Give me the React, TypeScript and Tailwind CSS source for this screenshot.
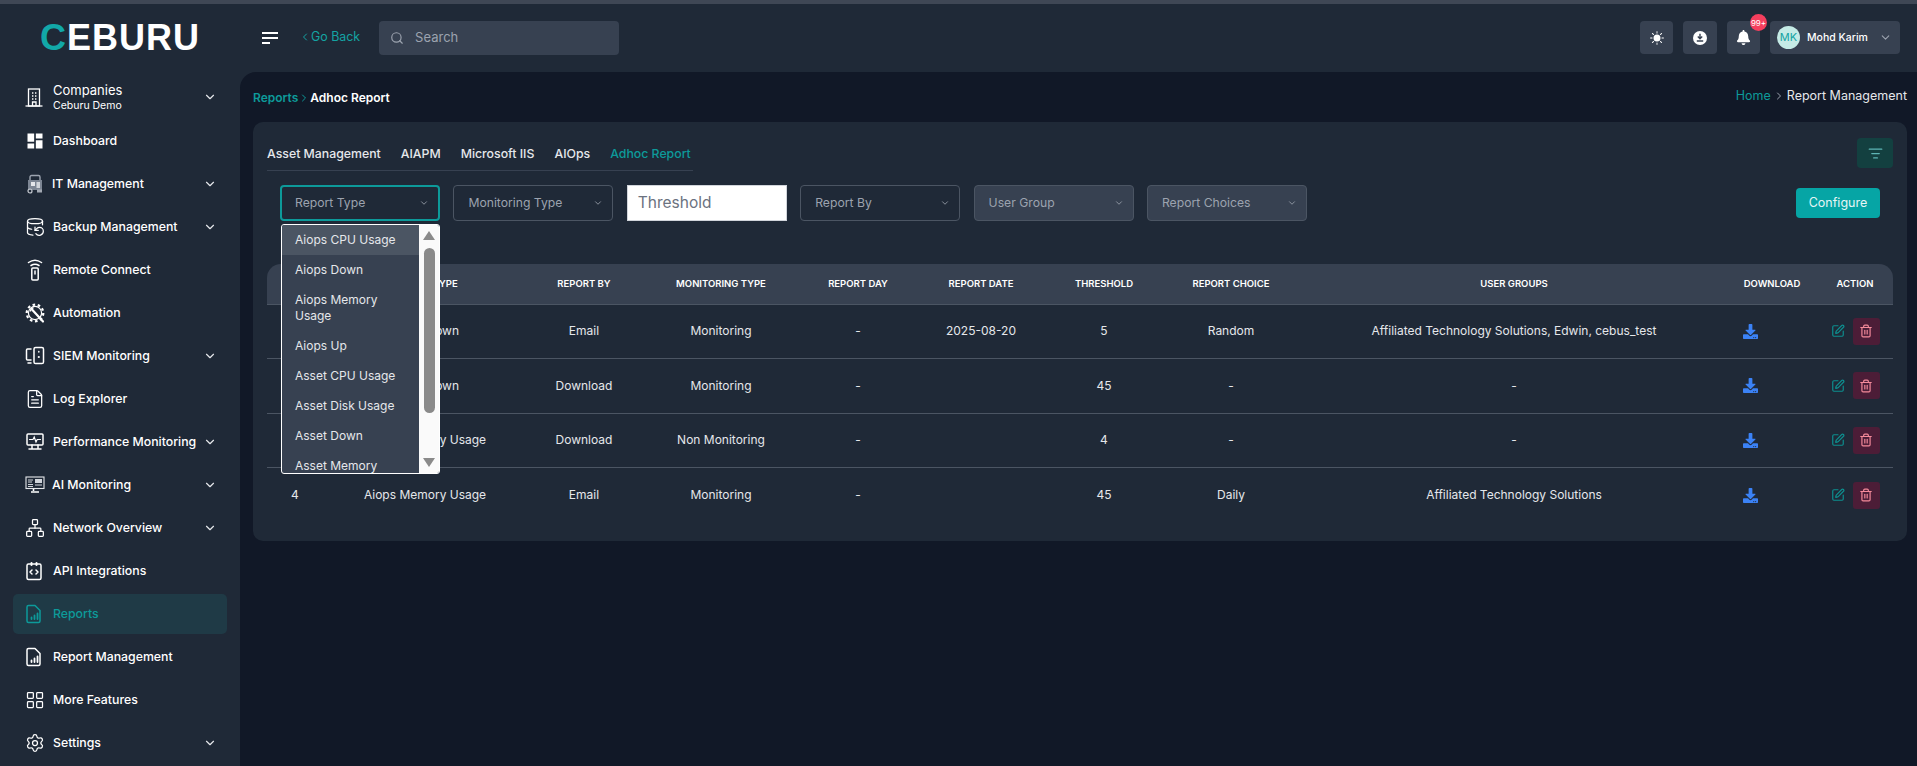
import { ChevronDown, ChevronLeft, ChevronRight, Search, ListFilter, SquarePen, Trash2, DatabaseBackup, FileText, Network, LayoutGrid, Settings } from 'lucide-react';
import { MdDashboard } from 'react-icons/md';
import { FaDownload, FaBell } from 'react-icons/fa';
import { BsSunFill } from 'react-icons/bs';

const CompanyIcon = () => (
  <svg width="18" height="19" viewBox="0 0 18 19" fill="none" stroke="#fff" strokeWidth="1.300">
    <rect x="3.500" y="1" width="11" height="17" />
    <path d="M0.500 18h17" />
    <path d="M7 5h1.400M10 5h1.400M7 8h1.400M10 8h1.400M7 11h1.400M10 11h1.400" strokeWidth="1.500" />
    <path d="M7.500 18v-4h3.500v4" />
  </svg>
);

const ItIcon = () => (
  <svg width="20" height="20" viewBox="0 0 20 20" fill="none">
    <rect x="5" y="1.500" width="10" height="8" rx="1.500" stroke="#9ca3af" strokeWidth="1.400" />
    <rect x="3" y="6" width="14" height="10" fill="#7d8694" />
    <rect x="6" y="8" width="4" height="4" fill="#e5e7eb" />
    <rect x="11.500" y="8" width="3.500" height="6" fill="#d1d5db" />
    <circle cx="5" cy="17" r="2" stroke="#c5c9d0" strokeWidth="1.200" />
    <rect x="12" y="15.500" width="5" height="3" fill="#a3a9b3" />
  </svg>
);

const RemoteIcon = () => (
  <svg width="20" height="22" viewBox="0 0 20 22" fill="none" stroke="#fff" strokeWidth="1.500" strokeLinecap="round">
    <path d="M3.500 3.500C7.500 0.600 12.500 0.600 16.500 3.500" />
    <path d="M6 6.500c2.600-1.600 5.400-1.600 8 0" />
    <rect x="6.800" y="9" width="6.400" height="12" rx="1" />
    <path d="M10 12v3" />
  </svg>
);

const AutomationIcon = () => (
  <svg width="21" height="21" viewBox="0 0 21 21" fill="none" stroke="#fff">
    <circle cx="10" cy="10" r="8.300" strokeDasharray="2.600 2.600" strokeWidth="2.200" />
    <circle cx="10" cy="10" r="6.600" strokeWidth="1.200" />
    <path d="M7 6.500l11 12" strokeWidth="2.200" strokeLinecap="round" />
    <path d="M5.500 8.500a3 3 0 0 1 3-3.500" strokeWidth="1.400" />
  </svg>
);

const SiemIcon = () => (
  <svg width="20" height="20" viewBox="0 0 20 20" fill="none" stroke="#fff" strokeWidth="1.500" strokeLinecap="round">
    <path d="M6 3H2.500A1 1 0 0 0 1.500 4v9a1 1 0 0 0 1 1H6" />
    <path d="M3 17h3" />
    <rect x="9" y="1.500" width="9.500" height="16" rx="1.600" />
    <circle cx="13.800" cy="11" r="1.100" fill="#fff" stroke="none" />
    <path d="M13.800 5.500v.4" />
  </svg>
);

const PerfIcon = () => (
  <svg width="20" height="20" viewBox="0 0 20 20" fill="none" stroke="#fff" strokeWidth="1.500" strokeLinecap="round">
    <rect x="2" y="2" width="16" height="11" rx="1" />
    <path d="M4.500 7.500h3.500l1.200-2.500 1.800 5 1.200-2.500h3.300" strokeWidth="1.200" />
    <path d="M7 13v3.500M13 13v3.500M4 17h12" />
  </svg>
);

const AiIcon = () => (
  <svg width="20" height="18" viewBox="0 0 20 18" fill="none">
    <rect x="1" y="1" width="18" height="11.500" stroke="#e5e7eb" strokeWidth="1.100" />
    <path d="M3 4h5M3 6h4M3 8.500h5M3 10.500h5" stroke="#d1d5db" strokeWidth="1" />
    <rect x="10" y="3" width="7" height="4" fill="#d1d5db" />
    <path d="M10 9h7" stroke="#d1d5db" />
    <path d="M8.500 13v2M6 16h8" stroke="#fff" strokeWidth="1.600" />
  </svg>
);

const ApiIcon = () => (
  <svg width="18" height="20" viewBox="0 0 18 20" fill="none" stroke="#fff" strokeWidth="1.500" strokeLinecap="round" strokeLinejoin="round">
    <rect x="2" y="3" width="14" height="15.500" rx="1.500" />
    <path d="M6.500 2v2M11.500 2v2" strokeWidth="2" />
    <path d="M7 9l-2 2 2 2M11 9l2 2-2 2" />
  </svg>
);

const ReportIcon = ({ color }: { color: string }) => (
  <svg width="18" height="20" viewBox="0 0 18 20" fill="none" stroke={color} strokeWidth="1.500" strokeLinecap="round" strokeLinejoin="round">
    <path d="M3.500 1.500h6.500l5 5V17a1.500 1.500 0 0 1-1.500 1.500h-10A1.500 1.500 0 0 1 2 17V3a1.500 1.500 0 0 1 1.500-1.500z" />
    <path d="M6.500 15v-1.500M9.500 15v-3.500M12.500 15V9.500" strokeWidth="1.800" />
  </svg>
);

const CircleDownload = () => (
  <svg width="14" height="14" viewBox="0 0 14 14">
    <circle cx="7" cy="7" r="7" fill="#fff" />
    <path d="M7 2.800v4.600M4.800 5.600L7 7.800l2.200-2.200M3.800 10h6.400" fill="none" stroke="#374151" strokeWidth="1.400" />
  </svg>
);

const sidebarItems = [
  { label: 'Dashboard', icon: <MdDashboard size={20} color="#fff" /> },
  { label: 'IT Management', icon: <ItIcon />, arrow: true, tight: true },
  { label: 'Backup Management', icon: <DatabaseBackup size={20} color="#fff" strokeWidth={1.5} />, arrow: true },
  { label: 'Remote Connect', icon: <RemoteIcon /> },
  { label: 'Automation', icon: <AutomationIcon /> },
  { label: 'SIEM Monitoring', icon: <SiemIcon />, arrow: true },
  { label: 'Log Explorer', icon: <FileText size={20} color="#fff" strokeWidth={1.5} /> },
  { label: 'Performance Monitoring', icon: <PerfIcon />, arrow: true },
  { label: 'AI Monitoring', icon: <AiIcon />, arrow: true, tight: true },
  { label: 'Network Overview', icon: <Network size={20} color="#fff" strokeWidth={1.5} />, arrow: true },
  { label: 'API Integrations', icon: <ApiIcon /> },
  { label: 'Reports', icon: <ReportIcon color="#0d9a9a" />, active: true },
  { label: 'Report Management', icon: <ReportIcon color="#fff" /> },
  { label: 'More Features', icon: <LayoutGrid size={20} color="#fff" strokeWidth={1.5} /> },
  { label: 'Settings', icon: <Settings size={20} color="#fff" strokeWidth={1.5} />, arrow: true },
];

const tabs = ['Asset Management', 'AIAPM', 'Microsoft IIS', 'AIOps', 'Adhoc Report'];

const dropdownOptions = ['Aiops CPU Usage', 'Aiops Down', 'Aiops Memory Usage', 'Aiops Up', 'Asset CPU Usage', 'Asset Disk Usage', 'Asset Down', 'Asset Memory Usage'];

const columns = [
  { name: '#', width: 'w-[56px]' },
  { name: 'Report Type', width: 'w-[204px]' },
  { name: 'Report By', width: 'w-[114px]' },
  { name: 'Monitoring Type', width: 'w-[160px]' },
  { name: 'Report Day', width: 'w-[114px]' },
  { name: 'Report Date', width: 'w-[132px]' },
  { name: 'Threshold', width: 'w-[114px]' },
  { name: 'Report Choice', width: 'w-[140px]' },
  { name: 'User Groups', width: 'w-[426px]' },
  { name: 'Download', width: 'w-[90px]' },
  { name: 'Action', width: 'w-[76px]' },
];

const rows = [
  ['1', 'Aiops Down', 'Email', 'Monitoring', '-', '2025-08-20', '5', 'Random', 'Affiliated Technology Solutions, Edwin, cebus_test'],
  ['2', 'Aiops Down', 'Download', 'Monitoring', '-', '', '45', '-', '-'],
  ['3', 'Aiops Memory Usage', 'Download', 'Non Monitoring', '-', '', '4', '-', '-'],
  ['4', 'Aiops Memory Usage', 'Email', 'Monitoring', '-', '', '45', 'Daily', 'Affiliated Technology Solutions'],
];

function Dropdown() {
  return (
    <div className="absolute left-[-1px] top-[37px] z-10 flex h-[250px] w-[159px] overflow-hidden rounded-[3px] border border-white bg-[#374151]">
      <div className="flex-1 overflow-hidden">
        {dropdownOptions.map((opt, i) => (
          <div key={opt} className={`px-[13px] py-[7px] text-[12px] leading-[16px] text-[#e5e7eb] ${i === 0 ? 'bg-[#4b5563]' : ''}`}>
            {opt}
          </div>
        ))}
      </div>
      <div className="flex w-[20px] flex-col items-center bg-[#fafafa] pt-[6px]">
        <svg width="12" height="9" viewBox="0 0 12 9"><polygon points="6,0 12,9 0,9" fill="#8a8a8a" /></svg>
        <div className="mt-[8px] h-[165px] w-[11px] rounded-full bg-[#8a8a8a]" />
        <svg className="mt-[45px]" width="12" height="9" viewBox="0 0 12 9"><polygon points="0,0 12,0 6,9" fill="#8a8a8a" /></svg>
      </div>
    </div>
  );
}

function FilterSelect({ label, focused, disabled }: { label: string; focused?: boolean; disabled?: boolean }) {
  return (
    <div className={`relative flex h-[36px] w-[160px] items-center justify-between rounded-[4px] pr-[9px] text-[12.200px] text-[#9ca3af] ${focused ? 'border-2 border-[#0d9a9a] pl-[13px]' : 'border border-[#4b5563] pl-[14px]'} ${disabled ? 'bg-[#374151]' : ''}`}>
      <span>{label}</span>
      <ChevronDown size={10} color="#9ca3af" strokeWidth={2} />
      {focused && <Dropdown />}
    </div>
  );
}

export default function App() {
  return (
    <div className="flex h-screen w-screen flex-col overflow-hidden bg-[#1f2937] text-white [font-family:Inter,sans-serif]">
      <div className="h-[4px] shrink-0 bg-[#3f4755]" />

      <header className="flex h-[68px] shrink-0 items-center pb-[1px]">
        <div className="w-[240px] pl-[40px]">
          <span className="text-[36px] font-bold leading-none tracking-[1px] [font-family:'Liberation_Sans',sans-serif]">
            <span className="text-[#12a8a8]">C</span>EBURU
          </span>
        </div>
        <div className="flex flex-1 items-center pl-[22px] pr-[17px]">
          <svg width="17" height="14" viewBox="0 0 17 14" stroke="#fff" strokeWidth="2">
            <path d="M0 2h16M0 7h16M0 12h8" />
          </svg>
          <button className="ml-[20px] flex items-center text-[12.400px] text-[#14a3a3]">
            <ChevronLeft size={12} />
            Go Back
          </button>
          <div className="ml-[19px] flex h-[34px] w-[240px] items-center rounded-[4px] bg-[#374151] pl-[11px] text-[13px] text-[#9ca3af]">
            <Search size={14} color="#9ca3af" />
            <span className="ml-[11px]">Search</span>
          </div>

          <div className="ml-auto flex items-center">
            <button className="flex h-[33px] w-[33px] items-center justify-center rounded-[4px] bg-[#374151]">
              <BsSunFill size={14} color="#fff" />
            </button>
            <button className="ml-[10px] flex h-[33px] w-[34px] items-center justify-center rounded-[4px] bg-[#374151]">
              <CircleDownload />
            </button>
            <button className="relative ml-[10px] flex h-[33px] w-[33px] items-center justify-center rounded-[4px] bg-[#374151]">
              <FaBell size={15} color="#fff" />
              <span className="absolute -right-[7px] -top-[7px] flex h-[17px] w-[17px] items-center justify-center rounded-full bg-[#f43f5e] text-[8px]">99+</span>
            </button>
            <div className="ml-[10px] flex h-[33px] w-[130px] items-center rounded-[4px] bg-[#374151] pl-[7px]">
              <span className="flex h-[23px] w-[23px] items-center justify-center rounded-full bg-[#c5ebe6] text-[11px] text-[#14a3a3]">MK</span>
              <span className="ml-[7px] text-[10.500px] font-medium">Mohd Karim</span>
              <ChevronDown className="ml-auto mr-[8px]" size={13} color="#9ca3af" />
            </div>
          </div>
        </div>
      </header>

      <div className="flex min-h-0 flex-1">
        <aside className="flex w-[240px] shrink-0 flex-col gap-[3px] px-[13px] pt-[6px]">
          <div className="flex h-[40px] shrink-0 items-center pb-[2px] pl-[12px] pr-[10px]">
            <span className="flex w-[28px] shrink-0"><CompanyIcon /></span>
            <div className="flex flex-col">
              <span className="text-[13px] leading-[18px]">Companies</span>
              <span className="text-[10.500px] leading-[14px]">Ceburu Demo</span>
            </div>
            <ChevronDown className="ml-auto" size={14} color="#e5e7eb" />
          </div>
          {sidebarItems.map((item) => (
            <div
              key={item.label}
              className={`flex h-[40px] shrink-0 items-center rounded-[5px] pl-[12px] pr-[10px] ${item.active ? 'bg-[#1f3a46] text-[#0d9a9a]' : ''}`}
            >
              <span className={`flex shrink-0 ${item.tight ? 'w-[27px]' : 'w-[28px]'}`}>{item.icon}</span>
              <span className="whitespace-nowrap text-[12.300px] font-medium">{item.label}</span>
              {item.arrow && <ChevronDown className="ml-auto" size={14} color="#e5e7eb" />}
            </div>
          ))}
        </aside>

        <main className="flex-1 rounded-tl-[16px] bg-[#111827] pl-[13px] pr-[10px]">
          <div className="flex h-[50px] items-center justify-between pt-[2px]">
            <div className="flex items-center text-[12px] font-semibold">
              <span className="text-[#0d9a9a]">Reports</span>
              <ChevronRight size={12} color="#0d9a9a" />
              <span>Adhoc Report</span>
            </div>
            <div className="flex items-center pb-[4px] text-[12.500px]">
              <span className="text-[#0d9a9a]">Home</span>
              <ChevronRight size={12} color="#9ca3af" className="mx-[2px]" />
              <span className="text-[#e5e7eb]">Report Management</span>
            </div>
          </div>

          <section className="h-[419px] rounded-[10px] bg-[#1f2937] pl-[14px] pr-[14px] pt-[16px]">
            <div className="flex items-start justify-between">
              <nav className="flex h-[33px] w-[426px] gap-[20px] whitespace-nowrap border-b border-[#374151] pt-[7px] text-[12.300px] font-medium">
                {tabs.map((tab) => (
                  <span key={tab} className={tab === 'Adhoc Report' ? 'text-[#0d9a9a]' : 'text-[#e5e7eb]'}>{tab}</span>
                ))}
              </nav>
              <button className="flex h-[30px] w-[36px] items-center justify-center rounded-[4px] bg-[#134040]">
                <ListFilter size={15} color="#5eb5b5" />
              </button>
            </div>

            <div className="mt-[14px] flex items-center pl-[13px] pr-[13px]">
              <div className="flex gap-[13.400px]">
                <FilterSelect label="Report Type" focused />
                <FilterSelect label="Monitoring Type" />
                <div className="flex h-[36px] w-[160px] items-center border border-[#d1d5db] bg-white pl-[10px] text-[15.500px] text-[#6b7280]">Threshold</div>
                <FilterSelect label="Report By" />
                <FilterSelect label="User Group" disabled />
                <FilterSelect label="Report Choices" disabled />
              </div>
              <button className="ml-auto h-[30px] w-[84px] rounded-[4px] bg-[#06a5a5] text-[12.500px] text-[#e5f6f6]">Configure</button>
            </div>

            <table className="mt-[43px] w-full table-fixed border-collapse text-center">
              <colgroup>
                {columns.map((col) => (
                  <col key={col.name} className={col.width} />
                ))}
              </colgroup>
              <thead>
                <tr className="h-[40px] border-b border-[#4b5563] bg-[#374151] text-[9.500px] uppercase">
                  {columns.map((col, i) => (
                    <th key={col.name} className={`font-semibold ${i === 0 ? 'rounded-tl-[14px]' : ''} ${i === columns.length - 1 ? 'rounded-tr-[14px]' : ''}`}>
                      {col.name}
                    </th>
                  ))}
                </tr>
              </thead>
              <tbody className="text-[12px] text-[#e5e7eb]">
                {rows.map((row, r) => (
                  <tr key={row[0]} className={`h-[54.500px] ${r < rows.length - 1 ? 'border-b border-[#4b5563]' : ''}`}>
                    {row.map((cell, c) => (
                      <td key={c}>{cell}</td>
                    ))}
                    <td>
                      <FaDownload size={15} color="#3b82f6" className="ml-[16px]" />
                    </td>
                    <td>
                      <div className="flex items-center justify-center gap-[8px]">
                        <SquarePen size={14} color="#0d8f8f" />
                        <button className="flex h-[27px] w-[27px] items-center justify-center rounded-[3px] bg-[#4c1d37]">
                          <Trash2 size={14} color="#f58b9b" />
                        </button>
                      </div>
                    </td>
                  </tr>
                ))}
              </tbody>
            </table>
          </section>
        </main>
      </div>
    </div>
  );
}
